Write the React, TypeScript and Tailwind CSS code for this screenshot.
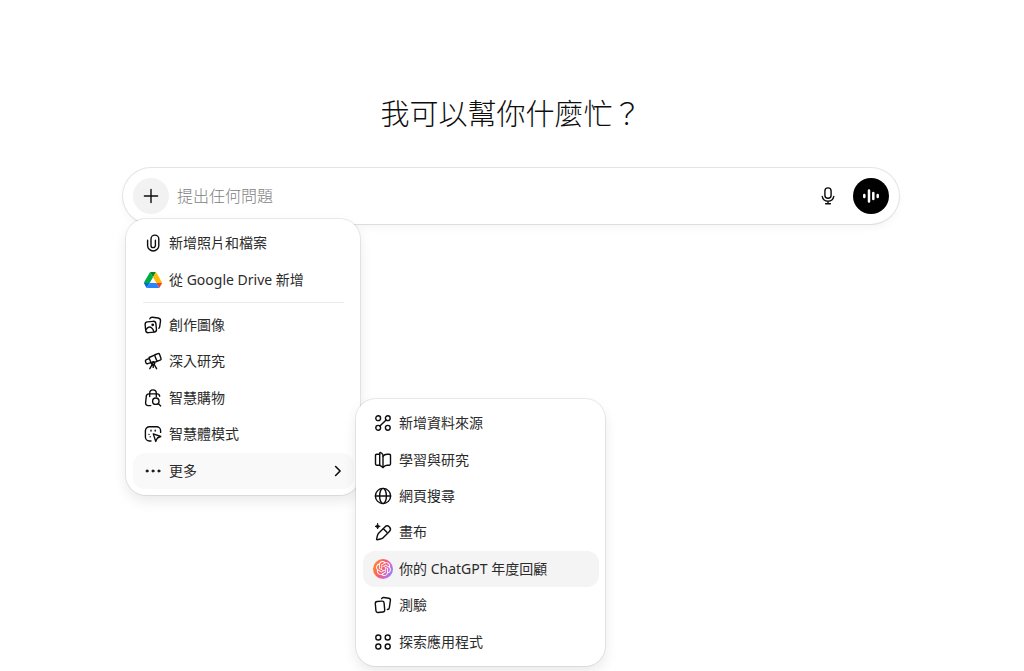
import type { ReactNode } from "react";
import { SiOpenai } from "react-icons/si";

function Icon({ children }: { children: ReactNode }) {
  return (
    <svg
      viewBox="0 0 20 20"
      className="size-5 shrink-0"
      fill="none"
      stroke="currentColor"
      strokeWidth="1.4"
      strokeLinecap="round"
      strokeLinejoin="round"
      aria-hidden="true"
    >
      {children}
    </svg>
  );
}

const PlusIcon = () => (
  <Icon>
    <path d="M10 3.400v13.200M3.400 10h13.200" />
  </Icon>
);

const MicIcon = () => (
  <Icon>
    <rect x="6.900" y="1.900" width="6.200" height="10.400" rx="3.100" />
    <path d="M4.200 10.400a5.900 5.900 0 0 0 11.600 0M10 15.100v2.800M7.600 17.700h4.800" />
  </Icon>
);

const VoiceIcon = () => (
  <svg viewBox="0 0 20 20" className="size-5" fill="none" stroke="currentColor" strokeLinecap="round" strokeWidth="2.500" aria-hidden="true">
    <path d="M3.300 9v2M8 4.600v10.800M12.300 7v6M16.700 9v2" />
  </svg>
);

const ClipIcon = () => (
  <Icon>
    <path d="M4.600 7.200v5.200a5.600 5.600 0 0 0 11.200 0V6a3.900 3.900 0 0 0-7.800 0v6.400a2.200 2.200 0 0 0 4.400 0V7.200" />
  </Icon>
);

const DriveIcon = () => (
  <svg viewBox="0 0 87.3 78" className="mx-px w-[18px] shrink-0" aria-hidden="true">
    <path fill="#0066da" d="m6.6 66.85 3.85 6.65c.8 1.4 1.95 2.5 3.3 3.3l13.75-23.8h-27.5c0 1.55.4 3.1 1.2 4.5z" />
    <path fill="#00ac47" d="m43.65 25-13.75-23.8c-1.35.8-2.5 1.9-3.3 3.3l-25.4 44a9.06 9.06 0 0 0 -1.2 4.5h27.5z" />
    <path fill="#ea4335" d="m73.55 76.8c1.35-.8 2.5-1.9 3.3-3.3l1.6-2.75 7.65-13.25c.8-1.4 1.2-2.95 1.2-4.5h-27.5l5.85 11.5z" />
    <path fill="#00832d" d="m43.65 25 13.75-23.8c-1.35-.8-2.9-1.2-4.5-1.2h-18.5c-1.6 0-3.15.45-4.5 1.2z" />
    <path fill="#2684fc" d="m59.8 53h-32.3l-13.75 23.8c1.35.8 2.9 1.2 4.5 1.2h50.8c1.6 0 3.15-.45 4.5-1.2z" />
    <path fill="#ffba00" d="m73.4 26.5-12.7-22c-.8-1.4-1.95-2.5-3.3-3.3l-13.75 23.8 16.15 28h27.45c0-1.55-.4-3.1-1.2-4.5z" />
  </svg>
);

const ImagesIcon = () => (
  <Icon>
    <rect x="2.400" y="6.600" width="10.800" height="10.800" rx="2.600" transform="rotate(-6 7.800 12)" />
    <path d="M6.800 3.900c.4-1.200 1.300-1.800 2.600-1.700l5.700.8c1.600.2 2.600 1.400 2.400 3l-.8 5.600c-.1.700-.4 1.200-.8 1.600" />
    <path d="M3.200 14.300c1.600-2.200 3.600-3 5.300-1.500 1.200 1 1.900 2.300 2.400 4" />
    <circle cx="9.700" cy="9.800" r=".7" fill="currentColor" />
  </Icon>
);

const TelescopeIcon = () => (
  <Icon>
    <path d="m12.300 3.600 2.600-1c.8-.3 1.400 0 1.700.8l1.400 4c.3.800 0 1.400-.8 1.700l-2 .7c-.8.300-1.400 0-1.700-.8l-1.700-4.200" />
    <path d="m13.100 3.400-7 3.100.3 1-3 1.200c-.9.400-1.200 1-.9 1.800l.5 1.400c.3.800.9 1.100 1.800.8l3-1.100.4.900 5.900-2.100M6.100 6.900l2 5" />
    <circle cx="10.200" cy="12.200" r="1.500" />
    <path d="m9.200 13.500-2.400 4.200M11.200 13.500l2.400 4.200M10.200 14v2.400" />
  </Icon>
);

const ShoppingIcon = () => (
  <Icon>
    <path d="M7.800 17.600H5.200c-1.700 0-2.800-1.200-2.600-2.900l.7-6.500c.2-1.500 1.100-2.300 2.600-2.300h8.200c1.500 0 2.400.8 2.600 2.300M6.700 8.600V5.200a3.300 3.300 0 0 1 6.600 0v3.400" />
    <circle cx="12.800" cy="13.200" r="3.200" />
    <path d="m15.200 15.600 2.500 2.300" />
  </Icon>
);

const AgentIcon = () => (
  <Icon>
    <path d="M8 17H6.400a4 4 0 0 1-4-4V6.800a4 4 0 0 1 4-4h7.200a4 4 0 0 1 4 4v1.600" />
    <path d="m10.300 9.900 7.400 2.600-3.300 1.500-1.700 3.400z" />
    <path d="M8 6.300v.7M12.200 6.300v.7M6 10.400v.01M7.200 12.800v.01" />
  </Icon>
);

const DotsIcon = () => (
  <Icon>
    <g fill="currentColor" strokeWidth=".8">
      <circle cx="4.100" cy="10" r="1.100" />
      <circle cx="10" cy="10" r="1.100" />
      <circle cx="15.900" cy="10" r="1.100" />
    </g>
  </Icon>
);

const ChevronIcon = () => (
  <Icon>
    <path d="m7.600 5.500 4.500 4.500-4.500 4.500" strokeWidth="1.600" />
  </Icon>
);

const SourcesIcon = () => (
  <Icon>
    <circle cx="5.200" cy="5.200" r="2.400" />
    <circle cx="14.800" cy="5.200" r="2.400" />
    <circle cx="5.200" cy="14.800" r="2.400" />
    <circle cx="14.800" cy="14.800" r="2.400" />
    <path d="m13.100 6.900-6.200 6.200" />
  </Icon>
);

const BookIcon = () => (
  <Icon>
    <path d="M10 6.200v11.300L7.300 15.600c-.4-.3-.6-.7-.6-1.200V3.500c0-.8.6-1.200 1.300-.7l1.200.9c.5.400.8 1 .8 1.700z" />
    <path d="M6.700 4.300H3.600c-.7 0-1.100.4-1.100 1.100v8.700c0 .7.400 1.100 1.100 1.100h3.200M10 17.500c1.200-1.600 2.400-2.300 4-2.300h2.400c.7 0 1.100-.4 1.100-1.100V5.400c0-.7-.4-1.100-1.100-1.100H14c-1.700 0-3 .6-4 1.900" />
  </Icon>
);

const GlobeIcon = () => (
  <Icon>
    <circle cx="10" cy="10" r="7.600" />
    <ellipse cx="10" cy="10" rx="3.400" ry="7.600" />
    <path d="M2.400 10h15.200" />
  </Icon>
);

const CanvasIcon = () => (
  <Icon>
    <path d="M4.300 17.700c-.5.100-.9-.3-.7-.8l1-3.900c.2-.7.500-1.300 1-1.800l6.300-6.300a3.100 3.100 0 0 1 4.500 4.500l-6.300 6.300c-.5.500-1 .8-1.700 1z" />
    <path d="m10.600 7 3.300 3.300" />
    <path d="M4.600 1.700c.3 1.700.9 2.300 2.600 2.700-1.700.3-2.300.9-2.600 2.600-.3-1.700-.9-2.300-2.600-2.600 1.700-.4 2.300-1 2.600-2.700z" fill="currentColor" strokeWidth=".9" />
  </Icon>
);

const RecapIcon = () => (
  <span className="flex size-5 shrink-0 items-center justify-center rounded-full bg-[linear-gradient(115deg,#ff8a2a_10%,#fb5a68_45%,#d06ad6_70%,#6f8cff_95%)] text-white">
    <SiOpenai className="size-[15px]" aria-hidden="true" />
  </span>
);

const CardsIcon = () => (
  <Icon>
    <rect x="2.600" y="6.300" width="8.800" height="11" rx="2" transform="rotate(-5 7 11.800)" />
    <path d="M8.600 3.700c.4-.9 1.200-1.300 2.200-1.200l4.900.7c1.200.2 1.900 1 1.700 2.200l-1.100 7.400c-.2 1.100-.8 1.700-1.900 1.700" />
  </Icon>
);

const AppsIcon = () => (
  <Icon>
    <circle cx="5.300" cy="5.500" r="2.500" />
    <circle cx="14.700" cy="5.500" r="2.500" />
    <circle cx="5.300" cy="14.500" r="2.500" />
    <circle cx="14.700" cy="14.500" r="2.500" />
  </Icon>
);

type Item = { label: string; icon: ReactNode; tone?: string; submenu?: boolean };

const attachItems: Item[] = [
  { label: "新增照片和檔案", icon: <ClipIcon /> },
  { label: "從 Google Drive 新增", icon: <DriveIcon /> },
];

const toolItems: Item[] = [
  { label: "創作圖像", icon: <ImagesIcon /> },
  { label: "深入研究", icon: <TelescopeIcon /> },
  { label: "智慧購物", icon: <ShoppingIcon /> },
  { label: "智慧體模式", icon: <AgentIcon /> },
  { label: "更多", icon: <DotsIcon />, tone: "bg-[#f9f9f9]", submenu: true },
];

const moreItems: Item[] = [
  { label: "新增資料來源", icon: <SourcesIcon /> },
  { label: "學習與研究", icon: <BookIcon /> },
  { label: "網頁搜尋", icon: <GlobeIcon /> },
  { label: "畫布", icon: <CanvasIcon /> },
  { label: "你的 ChatGPT 年度回顧", icon: <RecapIcon />, tone: "bg-[#f4f4f4]" },
  { label: "測驗", icon: <CardsIcon /> },
  { label: "探索應用程式", icon: <AppsIcon /> },
];

function MenuItem({ label, icon, tone = "", submenu }: Item) {
  return (
    <button
      type="button"
      role="menuitem"
      aria-haspopup={submenu ? "menu" : undefined}
      aria-expanded={submenu ? true : undefined}
      className={`flex flex-1 items-center gap-1.5 rounded-xl pr-1.5 pl-2.5 text-left text-sm font-normal whitespace-nowrap ${tone}`}
    >
      {icon}
      <span className="flex-1 text-[#2b2b2b]">{label}</span>
      {submenu && <ChevronIcon />}
    </button>
  );
}

const panel =
  "absolute flex flex-col rounded-[20px] bg-white py-1.5 pr-1.5 pl-[7px] shadow-[0_0_0_1px_rgba(0,0,0,0.08),0_6px_14px_rgba(0,0,0,0.09)]";

export default function App() {
  return (
    <main className="min-h-screen bg-white px-6 pt-24 font-['Noto_Sans','Noto_Sans_CJK_TC',sans-serif] font-light text-[#0d0d0d]">
      <div className="relative right-px mx-auto max-w-[776px]">
        <h1 className="text-center text-[29px] leading-9">我可以幫你什麼忙？</h1>
        <div className="relative mt-9">
          <form className="flex h-14 items-center rounded-full bg-white px-2.5 shadow-[0_0_0_1px_rgba(0,0,0,0.1),0_4px_8px_rgba(0,0,0,0.04)]">
            <button type="button" aria-label="新增" className="flex size-9 items-center justify-center rounded-full bg-[#f2f2f2]">
              <PlusIcon />
            </button>
            <input
              type="text"
              aria-label="提出任何問題"
              placeholder="提出任何問題"
              className="ml-2 min-w-0 flex-1 bg-transparent text-base outline-none placeholder:text-[#808080]"
            />
            <button type="button" aria-label="聽寫" className="flex size-9 items-center justify-center rounded-full">
              <MicIcon />
            </button>
            <button type="button" aria-label="語音" className="ml-[7px] flex size-9 items-center justify-center rounded-full bg-black text-white">
              <VoiceIcon />
            </button>
          </form>

          <div role="menu" className={`${panel} top-[51px] left-[3px] min-h-[276px] w-[234px]`}>
            <div className="flex flex-[2] flex-col">
              {attachItems.map((item) => (
                <MenuItem key={item.label} {...item} />
              ))}
            </div>
            <hr className="mx-2.5 my-1 border-[#ececec]" />
            <div className="flex flex-[5] flex-col">
              {toolItems.map((item) => (
                <MenuItem key={item.label} {...item} />
              ))}
            </div>
          </div>

          <div role="menu" aria-label="更多" className={`${panel} top-[231px] left-[233px] min-h-[267px] w-[249px]`}>
            {moreItems.map((item) => (
              <MenuItem key={item.label} {...item} />
            ))}
          </div>
        </div>
      </div>
    </main>
  );
}
